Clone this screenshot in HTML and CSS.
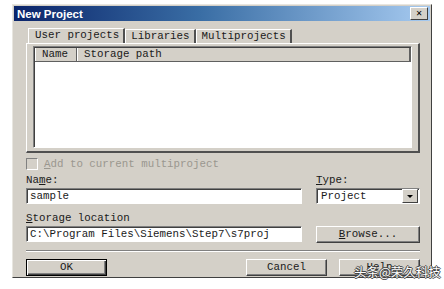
FILE: index.html
```html
<!DOCTYPE html>
<html lang="en">
<head>
    <meta charset="UTF-8">
    <title>New Project</title>
    <link rel="stylesheet" href="styles.css">
</head>
<body>
    <div class="window">
        <div class="titlebar">
            <span class="title">New Project</span>
            <span class="close">&#x2715;</span>
        </div>
        <div class="content">
            <div class="tabs">
                <div class="tab active">User projects</div>
                <div class="tab">Libraries</div>
                <div class="tab">Multiprojects</div>
            </div>
            <div class="panel">
                <div class="list">
                    <div class="list-head">
                        <div class="col col-name">Name</div>
                        <div class="col col-path">Storage path</div>
                    </div>
                </div>
            </div>

            <div class="check disabled">
                <span class="box"></span>
                <span><u>A</u>dd to current multiproject</span>
            </div>

            <div class="row">
                <div class="field grow">
                    <div class="lbl">Na<u>m</u>e:</div>
                    <div class="input">sample</div>
                </div>
                <div class="field side">
                    <div class="lbl"><u>T</u>ype:</div>
                    <div class="select">
                        <span>Project</span>
                        <span class="drop"><span class="arrow"></span></span>
                    </div>
                </div>
            </div>

            <div class="row storage">
                <div class="field grow">
                    <div class="lbl"><u>S</u>torage location</div>
                    <div class="input">C:\Program Files\Siemens\Step7\s7proj</div>
                </div>
                <div class="field side">
                    <div class="btn browse"><u>B</u>rowse...</div>
                </div>
            </div>
        </div>
        <div class="footer">
            <div class="btn default">OK</div>
            <div class="spacer"></div>
            <div class="btn">Cancel</div>
            <div class="btn">Help</div>
        </div>
    </div>
    <div class="watermark">头条@荣久科技</div>
</body>
</html>
```

FILE: styles.css
```css
body {
    margin: 0;
    background-color: white;
    font-family: "Liberation Mono", monospace;
    font-size: 10.8px;
    color: #1a1a1a;
    position: relative;
    height: 289px;
}

.window {
    margin: 4px 0 0 12px;
    width: 420px;
    height: 274px;
    box-sizing: border-box;
    background-color: #d4d0c8;
    border-top: 1px solid #e8e6e0;
    border-left: 1px solid #e8e6e0;
    border-right: 1px solid #404040;
    border-bottom: 1px solid #404040;
    display: flex;
    flex-direction: column;
}

.titlebar {
    height: 15px;
    margin: 1px 1px 0 1px;
    background: linear-gradient(to right, #0a246a, #3a6ea5 45%, #a6caf0);
    display: flex;
    align-items: center;
    justify-content: space-between;
    padding: 0 2px 0 3px;
}

.title {
    font-family: "Liberation Sans", Arial, sans-serif;
    font-weight: bold;
    font-size: 11.5px;
    color: white;
}

.close {
    width: 16px;
    height: 11px;
    background-color: #d4d0c8;
    border-top: 1px solid white;
    border-left: 1px solid white;
    border-right: 1px solid #404040;
    border-bottom: 1px solid #404040;
    font-family: "DejaVu Sans", sans-serif;
    font-size: 8px;
    font-weight: bold;
    color: black;
    display: flex;
    align-items: center;
    justify-content: center;
    line-height: 1;
}

.content {
    padding: 8px 11px 0 13px;
}

.tabs {
    display: flex;
    padding-left: 4px;
    height: 14px;
    align-items: flex-end;
}

.tab {
    height: 13px;
    line-height: 13px;
    padding: 0 4px 0 5px;
    border-left: 1px solid white;
    border-top: 1px solid white;
    border-right: 2px solid #505050;
}

.tab.active {
    height: 14px;
    padding-left: 6px;
    margin-left: -2px;
}

.panel {
    height: 110px;
    border-top: 1px solid white;
    border-left: 1px solid white;
    border-right: 2px solid #505050;
    border-bottom: 2px solid #505050;
    box-sizing: border-box;
    padding: 2px 6px 3px 6px;
}

.list {
    height: 100%;
    box-sizing: border-box;
    background-color: white;
    border-top: 1px solid #808080;
    border-left: 1px solid #808080;
    border-right: 1px solid white;
    border-bottom: 1px solid white;
    box-shadow: inset 1px 1px 0 #404040;
    padding: 1px 0 0 1px;
}

.list-head {
    display: flex;
    height: 13px;
    line-height: 12px;
    background-color: #d4d0c8;
    border-bottom: 1px solid #606060;
    border-right: 2px solid #606060;
}

.col {
    padding-left: 6px;
    border-left: 1px solid white;
}

.col-name {
    width: 34px;
    border-right: 1px solid #606060;
}

.col-path {
    flex: 1;
}

.check {
    display: flex;
    align-items: center;
    gap: 6px;
    margin-top: 5px;
    height: 12px;
}

.check.disabled {
    color: #9a978f;
}

.box {
    width: 10px;
    height: 10px;
    background-color: #d4d0c8;
    border-top: 1px solid #808080;
    border-left: 1px solid #808080;
    border-right: 1px solid white;
    border-bottom: 1px solid white;
}

.row {
    display: flex;
    gap: 14px;
    margin-top: 4px;
    align-items: flex-end;
}

.row.storage {
    margin-top: 8px;
}

.field.grow {
    flex: 1;
}

.field.side {
    width: 104px;
}

.lbl {
    height: 12px;
    line-height: 12px;
    margin-bottom: 2px;
}

.input {
    height: 16px;
    line-height: 14px;
    box-sizing: border-box;
    background-color: white;
    border-top: 1px solid #808080;
    border-left: 1px solid #808080;
    border-right: 1px solid white;
    border-bottom: 1px solid white;
    box-shadow: inset 1px 1px 0 #404040;
    padding-left: 3px;
    white-space: nowrap;
    overflow: hidden;
}

.select {
    height: 16px;
    line-height: 14px;
    box-sizing: border-box;
    background-color: white;
    border-top: 1px solid #808080;
    border-left: 1px solid #808080;
    border-right: 1px solid white;
    border-bottom: 1px solid white;
    box-shadow: inset 1px 1px 0 #404040;
    padding-left: 4px;
    display: flex;
    justify-content: space-between;
    align-items: center;
}

.drop {
    width: 14px;
    height: 12px;
    margin-right: 1px;
    background-color: #d4d0c8;
    border-top: 1px solid white;
    border-left: 1px solid white;
    border-right: 1px solid #404040;
    border-bottom: 1px solid #404040;
    display: flex;
    align-items: center;
    justify-content: center;
}

.arrow {
    width: 0;
    height: 0;
    border-left: 3px solid transparent;
    border-right: 3px solid transparent;
    border-top: 3px solid black;
}

.btn {
    height: 17px;
    box-sizing: border-box;
    background-color: #d4d0c8;
    border-top: 1px solid white;
    border-left: 1px solid white;
    border-right: 1px solid #404040;
    border-bottom: 1px solid #404040;
    box-shadow: inset -1px -1px 0 #808080;
    display: flex;
    align-items: center;
    justify-content: center;
    line-height: 1;
}

.browse {
    margin-bottom: -1px;
}

.footer {
    margin: 8px 11px 0 13px;
    padding-top: 8px;
    border-top: 1px solid #808080;
    box-shadow: inset 0 1px 0 white;
    display: flex;
    gap: 12px;
}

.footer .btn {
    width: 81px;
}

.footer .btn.default {
    border: 1px solid black;
    box-shadow: inset 1px 1px 0 white, inset -1px -1px 0 #404040, inset -2px -2px 0 #808080;
}

.spacer {
    flex: 1;
}

.watermark {
    position: absolute;
    left: 354px;
    top: 263px;
    white-space: nowrap;
    font-family: "Noto Sans CJK SC", sans-serif;
    font-size: 12.5px;
    color: white;
    text-shadow: 1px 0 0 #444, -1px 0 0 #444, 0 1px 0 #444, 0 -1px 0 #444;
    line-height: 18px;
}
```
